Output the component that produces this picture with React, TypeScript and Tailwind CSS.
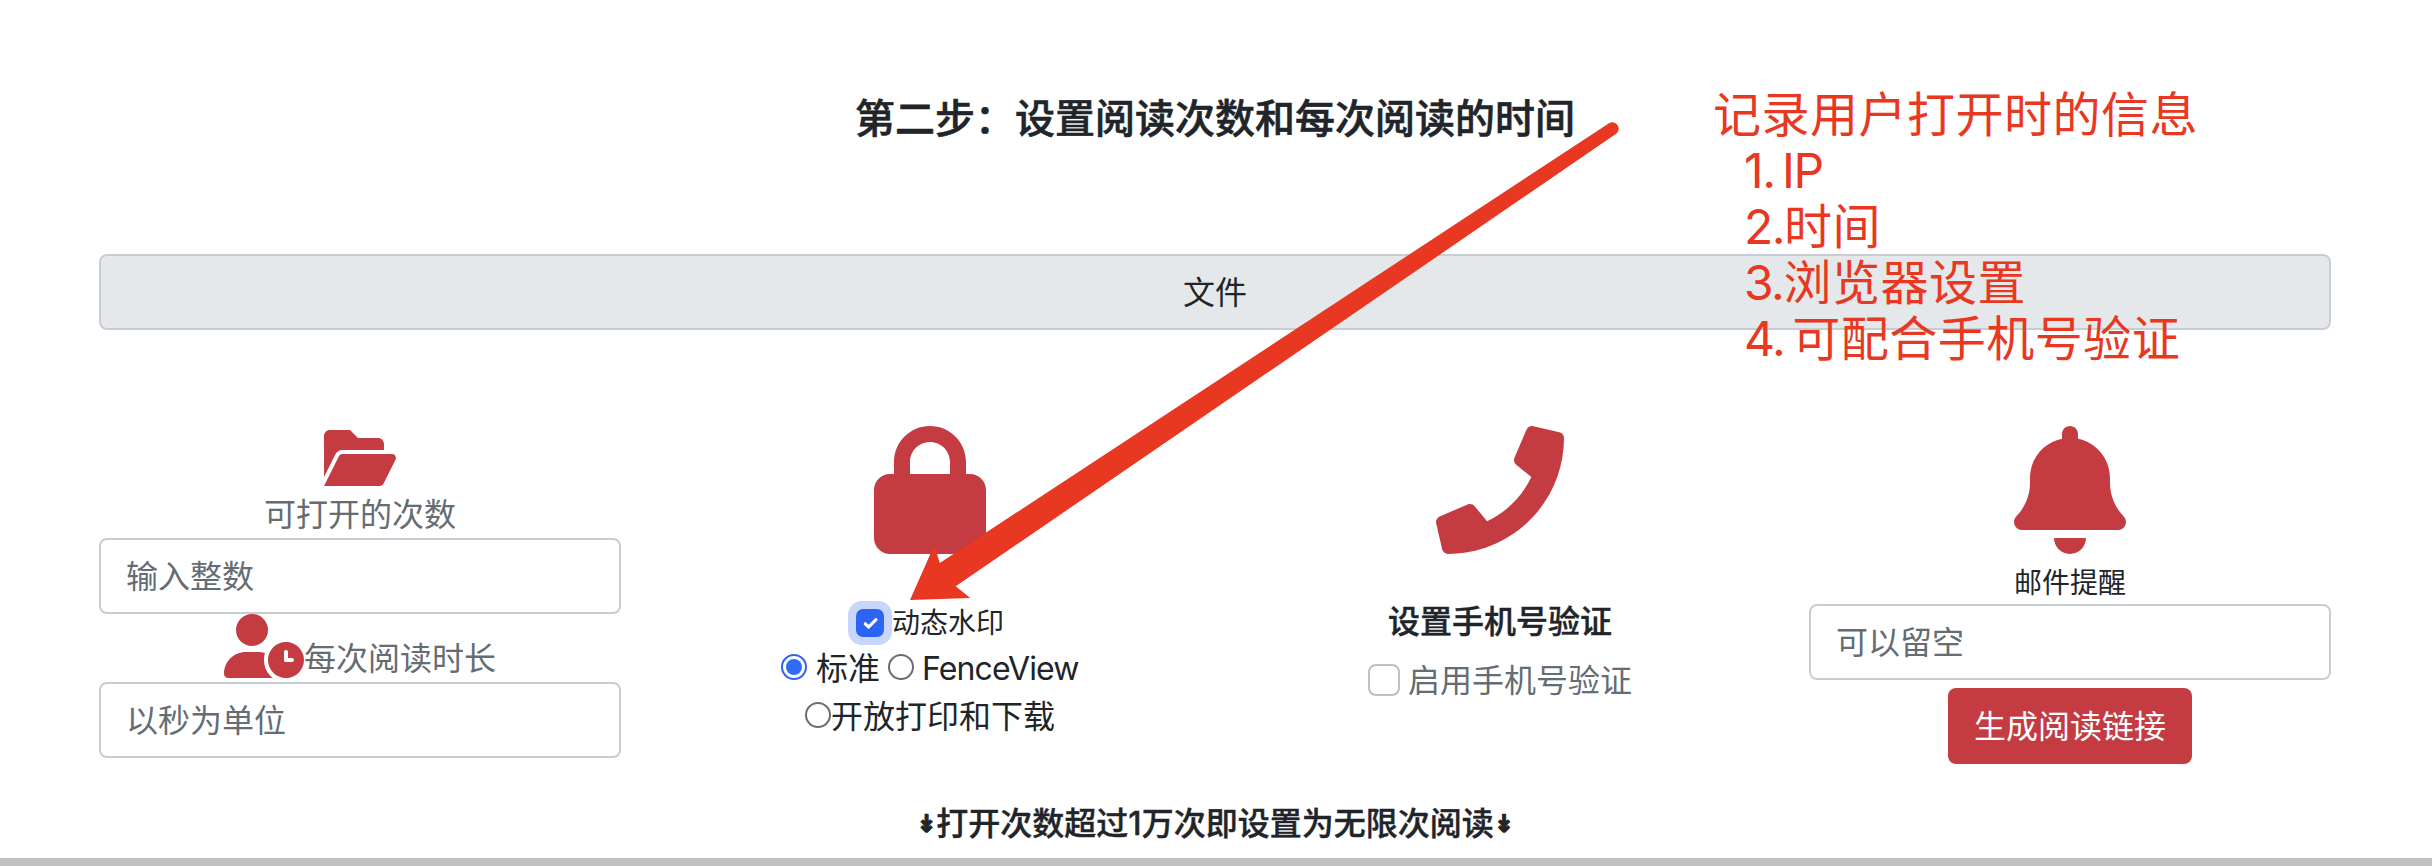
import type { ReactNode } from "react";

const inputClass =
  "block h-[76px] w-full rounded-[8px] border-2 border-[#c9cdd3] bg-white px-[25px] text-[32px] leading-none placeholder:text-[#646c74] placeholder:opacity-100 outline-none";

const cjk = "font-['Inter','Noto_Sans_CJK_SC',sans-serif]";

function Column({ children }: { children: ReactNode }) {
  return <div className="flex w-[570px] flex-col items-center px-[24px]">{children}</div>;
}

function Radio({ checked = false }: { checked?: boolean }) {
  return (
    <span
      className={
        checked
          ? "flex size-[26px] shrink-0 items-center justify-center rounded-full border-2 border-[#2c63f0] bg-white"
          : "flex size-[26px] shrink-0 rounded-full border-2 border-[#6d6d6d] bg-white"
      }
    >
      {checked && <span className="size-[16px] rounded-full bg-[#2f6bf6]" />}
    </span>
  );
}

function FolderOpenIcon() {
  return (
    <svg viewBox="0 0 576 512" className="h-[64px] w-[72px] fill-current">
      <path d="M147.8 192H480V144C480 117.5 458.5 96 432 96h-160l-64-64h-160C21.49 32 0 53.49 0 80v328.4l90.54-181.1C101.4 205.6 123.4 192 147.8 192zM543.1 224H147.8C135.7 224 124.6 230.8 119.2 241.7L0 480h447.1c12.12 0 23.2-6.852 28.62-17.69l96-192C583.2 249 567.7 224 543.1 224z" />
    </svg>
  );
}

function UserClockIcon() {
  return (
    <svg viewBox="0 0 640 512" className="h-[64px] w-[80px] shrink-0 fill-current">
      <circle cx="224" cy="128" r="128" />
      <path d="M328 312.6C311.4 307.1 293.6 304 275.2 304H173.8C77.6 304 0 381.8 0 477.3 0 496.5 15.5 512 34.7 512H391C348 480 320 428 320 368C320 349 322 329 328 312.6z" />
      <path d="M496 224c-79.63 0-144 64.38-144 144s64.38 144 144 144s144-64.38 144-144S575.6 224 496 224zM544 384h-54.25C484.4 384 480 379.6 480 374.3V304c0-8.836 7.164-16 16-16C504.8 288 512 295.2 512 304v48h32c8.838 0 16 7.162 16 16C560 376.8 552.8 384 544 384z" />
    </svg>
  );
}

function LockIcon() {
  return (
    <svg viewBox="0 0 448 512" className="h-[128px] w-[112px] fill-current">
      <path d="M80 192V144C80 64.47 144.5 0 224 0C303.5 0 368 64.47 368 144V192H384C419.3 192 448 220.7 448 256V448C448 483.3 419.3 512 384 512H64C28.65 512 0 483.3 0 448V256C0 220.7 28.65 192 64 192H80zM144 192H304V144C304 99.82 268.2 64 224 64C179.8 64 144 99.82 144 144V192z" />
    </svg>
  );
}

function PhoneIcon() {
  return (
    <svg viewBox="0 0 512 512" className="size-[128px] fill-current">
      <path d="M493.4 24.6l-104-24c-11.3-2.6-22.9 3.3-27.5 13.9l-48 112c-4.2 9.8-1.4 21.3 6.9 28l60.6 49.6c-36 76.7-98.9 140.5-177.2 177.2l-49.6-60.6c-6.8-8.3-18.2-11.1-28-6.9l-112 48C3.9 366.5-2 378.1.6 389.4l24 104C27.1 504.2 36.7 512 48 512c256.1 0 464-207.5 464-464 0-11.2-7.7-20.9-18.6-23.4z" />
    </svg>
  );
}

function BellIcon() {
  return (
    <svg viewBox="0 0 448 512" className="h-[128px] w-[112px] fill-current">
      <path d="M256 32V51.2C329 66.03 384 130.6 384 208V226.8C384 273.9 401.3 319.2 432.5 354.4L439.9 362.7C448.3 372.2 450.4 385.6 445.2 397.1C440 408.6 428.6 416 416 416H32C19.4 416 7.971 408.6 2.809 397.1C-2.353 385.6-.2883 372.2 8.084 362.7L15.5 354.4C46.74 319.2 64 273.9 64 226.8V208C64 130.6 118.1 66.03 192 51.2V32C192 14.33 206.3 0 224 0C241.7 0 256 14.33 256 32H256zM224 512C207 512 190.7 505.3 178.7 493.3C166.7 481.3 160 464.1 160 448H288C288 464.1 281.3 481.3 269.3 493.3C257.3 505.3 240.1 512 224 512z" />
    </svg>
  );
}

function Annotation() {
  return (
    <>
      <svg viewBox="0 0 2432 866" className="pointer-events-none absolute inset-0 h-[866px] w-[2432px]">
        <path
          d="M910 600L934.3 545L939.8 563L1609 123.2Q1614 120.4 1617.5 125Q1620.5 130 1616.5 133.6L955.7 586.3L970.3 598Z"
          fill="#e83822"
        />
      </svg>
      <div className="pointer-events-none absolute left-[1713px] top-[87px] whitespace-pre text-[48px] leading-[56px] tracking-[0.5px] text-[#e83822]">
        <p>记录用户打开时的信息</p>
        <ol className="pl-[31px]">
          <li className="tracking-[-1.3px] [word-spacing:-5px]">1. IP</li>
          <li>
            <span className="tracking-[-1.5px]">2.</span>时间
          </li>
          <li>
            <span className="tracking-[-1.5px]">3.</span>浏览器设置
          </li>
          <li>
            <span className="tracking-[-1.5px] [word-spacing:-4px]">4. </span>可配合手机号验证
          </li>
        </ol>
      </div>
    </>
  );
}

export default function App() {
  return (
    <div className={`relative flex h-[866px] w-[2432px] flex-col overflow-hidden bg-white text-[#212529] ${cjk}`}>
      <main className="ml-[75px] flex w-[2280px] grow flex-col">
        <h1 className="mt-[95px] h-[48px] whitespace-nowrap text-center text-[40px] font-medium leading-[48px] [-webkit-text-stroke:0.6px_#212529]">
          第二步：设置阅读次数和每次阅读的时间
        </h1>

        <div className="mx-[24px] mt-[111px] flex h-[76px] items-center justify-center rounded-[8px] border-2 border-[#c9cdd3] bg-[#e4e8eb] pt-[2px] text-[32px] leading-[48px]">
          文件
        </div>

        <section className="mt-[96px] flex h-[364px] items-start">
          <Column>
            <div className="text-[#c43b42]">
              <FolderOpenIcon />
            </div>
            <label className="h-[48px] text-[32px] leading-[50px] text-[#646c74]">可打开的次数</label>
            <input className={inputClass} placeholder="输入整数" />
            <div className="flex h-[68px] items-start text-[#c43b42]">
              <UserClockIcon />
              <label className="mt-[21px] text-[32px] leading-[48px] text-[#646c74]">每次阅读时长</label>
            </div>
            <input className={inputClass} placeholder="以秒为单位" />
          </Column>

          <Column>
            <div className="text-[#c43b42]">
              <LockIcon />
            </div>
            <div className="mt-[47px] flex h-[44px] items-center self-start pl-[179px]">
              <span className="flex size-[44px] items-center justify-center rounded-[14px] bg-[#c8d6fc]">
                <span className="flex size-[28px] items-center justify-center rounded-[7px] bg-[#2b63f3]">
                  <svg viewBox="0 0 28 28" className="size-[28px]">
                    <path
                      d="M9.3 14.8L12.7 18L20 10.6"
                      fill="none"
                      stroke="#fff"
                      strokeWidth="3.2"
                      strokeLinecap="round"
                      strokeLinejoin="round"
                    />
                  </svg>
                </span>
              </span>
              <label className="text-[28px] leading-[42px]">动态水印</label>
            </div>
            <div className="flex h-[44px] items-center self-start whitespace-nowrap pl-[112px] text-[32px] leading-[44px]">
              <Radio checked />
              <label className="ml-[9px] pt-[4px]">标准</label>
              <span className="ml-[8px] flex">
                <Radio />
              </span>
              <label className="ml-[8px] pt-[4px] tracking-[-0.9px]">FenceView</label>
            </div>
            <div className="mt-[4px] flex h-[44px] items-center text-[32px] leading-[44px]">
              <Radio />
              <label className="pt-[4px]">开放打印和下载</label>
            </div>
          </Column>

          <Column>
            <div className="text-[#c43b42]">
              <PhoneIcon />
            </div>
            <h2 className="mt-[44px] h-[48px] text-[32px] font-medium leading-[48px] [-webkit-text-stroke:0.4px_#212529]">
              设置手机号验证
            </h2>
            <div className="mt-[10px] flex h-[48px] items-center gap-[8px] text-[32px] leading-[48px] text-[#646c74]">
              <span className="size-[32px] rounded-[8px] border-2 border-[#bfbfbf] bg-white" />
              <label className="pt-[2px]">启用手机号验证</label>
            </div>
          </Column>

          <Column>
            <div className="text-[#c43b42]">
              <BellIcon />
            </div>
            <label className="mt-[8px] h-[42px] text-[28px] leading-[42px]">邮件提醒</label>
            <input className={inputClass} placeholder="可以留空" />
            <button className="mt-[8px] h-[76px] w-[244px] rounded-[8px] bg-[#c43b42] pt-[2px] text-[32px] leading-none text-white">
              生成阅读链接
            </button>
          </Column>
        </section>

        <p className="mt-[10px] flex h-[48px] items-center justify-center whitespace-nowrap text-[32px] font-medium leading-[48px] [-webkit-text-stroke:0.4px_#212529]">
          <span className="font-['DejaVu_Sans',sans-serif] text-[24px] font-bold [-webkit-text-stroke:1.2px_#212529]">↡</span>
          打开次数超过1万次即设置为无限次阅读
          <span className="font-['DejaVu_Sans',sans-serif] text-[24px] font-bold [-webkit-text-stroke:1.2px_#212529]">↡</span>
        </p>
      </main>

      <div className="h-[8px] w-full shrink-0 bg-[#c0c0c0]" />
      <Annotation />
    </div>
  );
}
